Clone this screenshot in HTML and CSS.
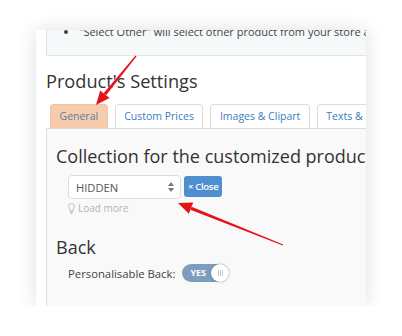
FILE: index.html
```html
<!DOCTYPE html>
<html lang="en">
<head>
  <meta charset="UTF-8" />
  <title>Product's Settings</title>
  <link rel="stylesheet" href="styles.css">
</head>
<body>

<div class="card">
  <div class="alert">
    <ul>
      <li>"Select Other" will select other product from your store and use it as the base product</li>
    </ul>
  </div>

  <h2 class="title">Product's Settings</h2>

  <div class="tabs">
    <a class="tab active">General</a>
    <a class="tab">Custom Prices</a>
    <a class="tab">Images &amp; Clipart</a>
    <a class="tab">Texts &amp; Fonts</a>
  </div>

  <div class="panel">
    <h3>Collection for the customized products</h3>
    <div class="field">
      <div class="select-row">
        <div class="select">
          <span>HIDDEN</span>
          <svg class="caret" width="6" height="10" viewBox="0 0 6 10">
            <path d="M3 0 L6 4 H0 Z M0 6 H6 L3 10 Z" fill="#777"/>
          </svg>
        </div>
        <button class="btn-close">× Close</button>
      </div>
      <div class="load-more">
        <svg width="7" height="11" viewBox="0 0 7 11">
          <path d="M3.5 0.7 C1.6 0.7 0.6 2 0.6 3.5 C0.6 5 1.8 5.6 2.1 6.8 V8.2 H4.9 V6.8 C5.2 5.6 6.4 5 6.4 3.5 C6.4 2 5.4 0.7 3.5 0.7 Z M2.3 9.4 H4.7 M2.7 10.4 H4.3" fill="none" stroke="#b3b3b3" stroke-width="0.9"/>
        </svg>
        Load more
      </div>
    </div>

    <h3 class="back">Back</h3>
    <div class="field switch-row">
      <span>Personalisable Back:</span>
      <div class="switch">
        <span class="yes">YES</span>
        <span class="knob"><i></i><i></i><i></i></span>
      </div>
    </div>
  </div>
</div>

<!-- annotation arrows -->
<svg class="arrows" width="402" height="336" viewBox="0 0 402 336">
  <g fill="#e5141b">
    <polygon points="136.5,56.4 135.5,55.6 103.6,93.2 106.1,95.2"/>
    <polygon points="96,105 109.5,98 100.2,90.4"/>
    <polygon points="283.2,244.4 282.8,245.6 190.4,209.7 191.6,206.7"/>
    <polygon points="178,203 193.2,202.6 188.8,213.8"/>
  </g>
</svg>

</body>
</html>
```

FILE: styles.css
```css
* {
  box-sizing: border-box;
  font-family: 'Open Sans', sans-serif;
}
body {
  margin: 0;
  background: #fff;
  color: #333;
  position: relative;
}
.card {
  width: 330px;
  height: 276px;
  margin: 30px 0 0 36px;
  padding-left: 10px;
  background: #fff;
  overflow: hidden;
  box-shadow: 0 0 18px rgba(0,0,0,0.13);
}
.alert {
  margin-top: -10px;
  width: 400px;
  height: 36px;
  background: #f6f9fa;
  border: 1px solid #dfe5e8;
  white-space: nowrap;
}
.alert ul {
  margin: 0;
  padding-left: 32px;
}
.alert li {
  font-size: 11px;
  line-height: 21px;
  color: #444;
}
.title {
  margin: 13px 0 0;
  font-size: 18.2px;
  font-weight: 400;
  line-height: 25px;
}
.tabs {
  display: flex;
  gap: 7px;
  margin: 10px 0 0 4px;
  white-space: nowrap;
}
.tab {
  display: block;
  height: 24px;
  padding: 0 8.5px;
  line-height: 23px;
  font-size: 10.5px;
  color: #3b7bbd;
  background: #fff;
  border: 1px solid #dcdcdc;
  border-bottom: none;
  border-radius: 4px 4px 0 0;
}
.tab.active {
  background: #f6cbae;
  border-color: #f1c2a4;
  color: #5f7c9c;
}
.panel {
  width: 400px;
  height: 200px;
  padding: 15px 0 0 9px;
  background: #f9f9f9;
  border-top: 1px solid #ddd;
  border-left: 1px solid #ddd;
  white-space: nowrap;
}
.panel h3 {
  margin: 0;
  font-size: 18px;
  font-weight: 400;
  line-height: 24px;
  color: #333;
}
.field {
  margin-left: 12px;
}
.select-row {
  display: flex;
  gap: 3px;
  margin-top: 7px;
  align-items: flex-start;
}
.select {
  width: 113px;
  height: 24px;
  display: flex;
  align-items: center;
  justify-content: space-between;
  padding: 0 6px 0 7px;
  background: #fff;
  border: 1px solid #ddd;
  border-radius: 4px;
  font-size: 11.2px;
  color: #555;
}
.btn-close {
  height: 21px;
  margin-top: 1px;
  padding: 0 4px;
  border: none;
  border-radius: 3px;
  background: #4f8fd0;
  color: #fff;
  font-size: 9.5px;
  font-weight: 600;
  letter-spacing: -0.3px;
}
.load-more {
  margin-top: 1px;
  display: flex;
  align-items: center;
  gap: 3px;
  font-size: 10px;
  line-height: 16px;
  color: #b3b3b3;
}
.panel h3.back {
  margin-top: 19px;
}
.switch-row {
  display: flex;
  align-items: center;
  gap: 7px;
  margin-top: 5px;
  font-size: 11.3px;
  color: #444;
}
.switch {
  position: relative;
  width: 47px;
  height: 18px;
  border-radius: 9px;
  background: #7e9dbd;
}
.switch .yes {
  position: absolute;
  left: 8px;
  top: 0;
  line-height: 18px;
  font-size: 9px;
  font-weight: 700;
  color: #fff;
}
.switch .knob {
  position: absolute;
  right: 0;
  top: 0;
  width: 18px;
  height: 18px;
  border-radius: 50%;
  background: #fff;
  box-shadow: 0 0 2px rgba(0,0,0,0.35);
  display: flex;
  justify-content: center;
  align-items: center;
  gap: 1px;
}
.switch .knob i {
  width: 1px;
  height: 6px;
  background: #c5cbd3;
}
.arrows {
  position: absolute;
  left: 0;
  top: 0;
  pointer-events: none;
}
```
